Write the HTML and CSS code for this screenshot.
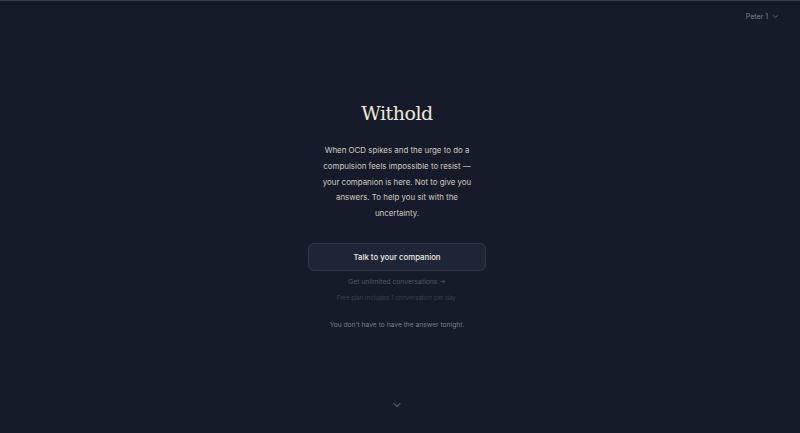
FILE: index.html
```html
<!DOCTYPE html>
<html lang="en">
<head>
<meta charset="utf-8">
<title>Withold</title>
<link rel="stylesheet" href="styles.css">
</head>
<body>
<div class="page">
  <header class="topbar">
    <button class="user">Peter 1
      <svg class="user-chev" width="7" height="7" viewBox="0 0 10 10"><path d="M2 3.5 L5 6.5 L8 3.5" fill="none" stroke="currentColor" stroke-width="1.3" stroke-linecap="round" stroke-linejoin="round"/></svg>
    </button>
  </header>
  <main class="hero">
    <h1 class="title">Withold</h1>
    <p class="lede">When OCD spikes and the urge to do a compulsion feels impossible to resist — your companion is here. Not to give you answers. To help you sit with the uncertainty.</p>
    <button class="cta">Talk to your companion</button>
    <a class="upgrade" href="#">Get unlimited conversations →</a>
    <p class="plan">Free plan includes 1 conversation per day.</p>
    <p class="reassure">You don't have to have the answer tonight.</p>
  </main>
  <div class="scroll">
    <svg width="12" height="12" viewBox="0 0 12 12"><path d="M3 4.5 L6 7.5 L9 4.5" fill="none" stroke="currentColor" stroke-width="1.4" stroke-linecap="round" stroke-linejoin="round"/></svg>
  </div>
</div>
</body>
</html>
```
FILE: styles.css
```css
html, body {
  margin: 0;
  padding: 0;
  height: 100%;
}
body {
  background: #161b29;
  font-family: Inter, "Noto Sans", sans-serif;
  overflow: hidden;
}
.page {
  height: 433px;
  box-sizing: border-box;
  border-top: 1px solid #3b3f47;
  padding-right: 6px;
  display: flex;
  flex-direction: column;
  align-items: center;
}
.topbar {
  align-self: stretch;
  display: flex;
  justify-content: flex-end;
  padding: 4px 15px 0 0;
  height: 22px;
}
.user {
  background: none;
  border: 0;
  color: #7d8290;
  font-family: Inter, sans-serif;
  font-size: 7px;
  display: flex;
  align-items: center;
  gap: 4px;
  padding: 0;
  cursor: pointer;
}
.user-chev { color: #5c6170; }
.hero {
  display: flex;
  flex-direction: column;
  align-items: center;
  padding-top: 73px;
  width: 100%;
}
.title {
  margin: 0;
  font-family: "DejaVu Serif", serif;
  font-weight: 400;
  font-size: 19px;
  line-height: 26px;
  color: #efe8d8;
  letter-spacing: -0.5px;
}
.lede {
  margin: 17px 0 0;
  width: 152px;
  text-align: center;
  font-size: 7.9px;
  line-height: 15.8px;
  color: #cfcbc3;
}
.cta {
  margin-top: 21px;
  width: 178px;
  height: 28px;
  border-radius: 6px;
  background: #1e2535;
  border: 1px solid #2f3749;
  color: #f0eee9;
  font-family: Inter, sans-serif;
  font-size: 7.8px;
  font-weight: 500;
  cursor: pointer;
}
.upgrade {
  margin-top: 5px;
  font-size: 6.8px;
  line-height: 11px;
  color: #4f5667;
  text-decoration: none;
}
.plan {
  margin: 6px 0 0;
  font-size: 6.1px;
  line-height: 10px;
  color: #3a4152;
}
.reassure {
  margin: 17px 0 0;
  font-size: 6.7px;
  line-height: 11px;
  color: #7b7f89;
}
.scroll {
  margin-top: auto;
  margin-bottom: 22px;
  color: #4c5365;
  display: flex;
}
```
